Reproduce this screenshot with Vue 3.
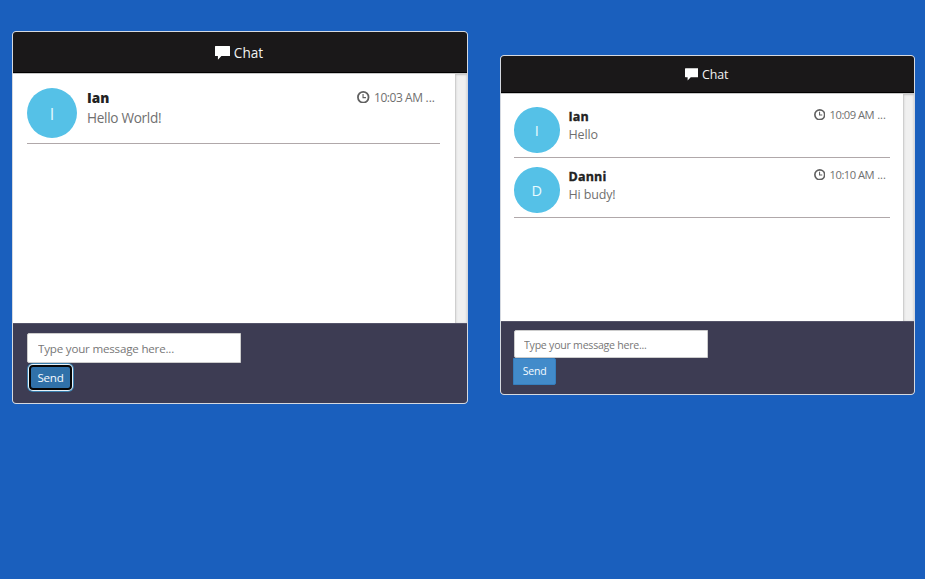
<script setup>
const rooms = [
  {
    size: 'large',
    focused: true,
    messages: [{ name: 'Ian', text: 'Hello World!', time: '10:03 AM' }]
  },
  {
    size: 'small',
    focused: false,
    messages: [
      { name: 'Ian', text: 'Hello', time: '10:09 AM' },
      { name: 'Danni', text: 'Hi budy!', time: '10:10 AM' }
    ]
  }
]
</script>

<template>
  <main class="page">
    <section v-for="room in rooms" :key="room.size" class="panel" :class="room.size">
      <header class="heading">
        <svg class="bubble" viewBox="0 0 15 14" aria-hidden="true">
          <path d="M0.5 0H14.5Q15 0 15 0.5V9.5Q15 10 14.5 10H6.4L2.9 13.8V10H0.5Q0 10 0 9.5V0.5Q0 0 0.5 0Z" fill="#fff" />
        </svg>
        <span class="title">Chat</span>
      </header>
      <div class="body">
        <ul class="list">
          <li v-for="m in room.messages" :key="m.time" class="message">
            <span class="avatar">{{ m.name[0] }}</span>
            <div class="content">
              <strong class="name">{{ m.name }}</strong>
              <span class="text">{{ m.text }}</span>
            </div>
            <small class="time">
              <svg class="clock" viewBox="0 0 12 12" aria-hidden="true">
                <circle cx="6" cy="6" r="5.1" fill="none" stroke="#606060" stroke-width="1.7" />
                <path d="M5.8 2.8V6.3H8.6" fill="none" stroke="#606060" stroke-width="1.1" />
              </svg>
              <span class="stamp">{{ m.time }}</span><span class="more">...</span>
            </small>
          </li>
        </ul>
        <div class="track"></div>
      </div>
      <footer class="footer">
        <input class="field" type="text" placeholder="Type your message here..." />
        <button class="send" :class="{ focused: room.focused }">Send</button>
      </footer>
    </section>
  </main>
</template>

<style>
body {
  background: #1a5fbd;
}
</style>

<style scoped>
* {
  box-sizing: border-box;
}
.page {
  display: flex;
  align-items: flex-start;
  gap: 32px;
  height: 579px;
  padding: 31px 0 0 12px;
  background: #1a5fbd;
  font-family: "Open Sans", "Noto Sans", sans-serif;
}
.panel {
  display: flex;
  flex: none;
  flex-direction: column;
  overflow: hidden;
  border: 1px solid #d5d9e0;
  border-radius: 4px;
  background: #fff;
}
.large {
  width: 456px;
  height: 373px;
}
.small {
  width: 415px;
  height: 340px;
  margin-top: 24px;
}
.heading {
  display: flex;
  flex: none;
  align-items: center;
  justify-content: center;
  gap: 4px;
  border-bottom: 1px solid #000;
  background: #1a1819;
  color: #f2f2f2;
  line-height: 20px;
}
.large .heading {
  height: 41px;
  padding: 1px 2px 0 0;
  font-size: 13.6px;
}
.small .heading {
  height: 37px;
  padding: 1px 2px 0 0;
  font-size: 12.4px;
  letter-spacing: -0.1px;
}
.bubble {
  width: 15px;
  height: 14px;
}
.small .bubble {
  width: 13.5px;
  height: 13px;
}
.body {
  display: flex;
  flex: 1;
  min-height: 0;
  border-top: 1px solid #c8c8c8;
}
.list {
  flex: 1;
  margin: 0;
  padding: 14px 15px 0 14px;
  list-style: none;
}
.small .list {
  padding: 13px 13px 0;
}
.track {
  width: 12px;
  background: #f0f0f0;
  box-shadow: inset 1px 1px 2px #c4c4c4, inset -1px 0 2px #ddd;
}
.small .track {
  width: 11px;
}
.message {
  display: flex;
  border-bottom: 1px solid #b0a8aa;
}
.large .message {
  height: 56px;
}
.small .message {
  height: 51px;
  margin-bottom: 9px;
}
.avatar {
  display: flex;
  flex: none;
  align-items: center;
  justify-content: center;
  border-radius: 50%;
  background: #55c1e7;
  color: #e8fbff;
}
.large .avatar {
  width: 50px;
  height: 50px;
  padding-top: 2px;
  font-size: 16px;
}
.small .avatar {
  width: 45.5px;
  height: 45.5px;
  padding-top: 1px;
  font-size: 14.5px;
}
.content {
  display: flex;
  flex: 1;
  flex-direction: column;
}
.large .content {
  padding-left: 10px;
  font-size: 13.6px;
  line-height: 20px;
}
.small .content {
  padding: 1px 0 0 9px;
  font-size: 12.5px;
  line-height: 18px;
}
.name {
  color: #222;
  font-weight: 800;
}
.small .name {
  font-size: 12.5px;
  font-weight: 700;
  letter-spacing: 0.2px;
  -webkit-text-stroke: 0.35px #222;
}
.text {
  color: #707070;
}
.large .text {
  letter-spacing: -0.3px;
}
.small .text {
  letter-spacing: -0.15px;
}
.time {
  display: flex;
  align-items: center;
  height: 18px;
  color: #707070;
}
.large .time {
  margin-right: 5px;
  font-size: 12px;
}
.small .time {
  height: 15px;
  margin-right: 4px;
  font-size: 11.2px;
}
.clock {
  width: 12.5px;
  height: 12.5px;
  margin-right: 4.5px;
}
.small .clock {
  width: 11.5px;
  height: 11.5px;
}
.stamp {
  letter-spacing: -0.45px;
}
.small .stamp {
  letter-spacing: -0.5px;
}
.more {
  margin-left: 3px;
}
.footer {
  display: flex;
  flex: none;
  flex-direction: column;
  align-items: flex-start;
  border-top: 1px solid #55546a;
  background: #3d3c53;
}
.large .footer {
  height: 80px;
  padding: 9px 14px;
}
.small .footer {
  height: 73px;
  padding: 8px 12px;
}
.field {
  flex: none;
  border: 1px solid #ccc;
  border-radius: 2px 0 0 2px;
  background: #fff;
  font-family: inherit;
}
.field::placeholder {
  color: #777;
  opacity: 1;
}
.large .field {
  width: 214px;
  height: 30px;
  padding: 1px 10px 0;
  font-size: 11.6px;
  letter-spacing: -0.2px;
}
.small .field {
  width: 194px;
  height: 28px;
  margin-left: 1px;
  padding: 1px 9px 0;
  font-size: 10.6px;
  letter-spacing: -0.25px;
}
.send {
  flex: none;
  padding: 0;
  border: 1px solid #357ebd;
  border-radius: 0 2px 2px 0;
  background: #428bca;
  color: #f5fbff;
  font-family: inherit;
}
.large .send {
  width: 43px;
  height: 25px;
  margin: 2px 0 0 2px;
  font-size: 11.6px;
  letter-spacing: -0.25px;
}
.small .send {
  width: 43px;
  height: 27px;
  padding-bottom: 2px;
  font-size: 10.5px;
  letter-spacing: -0.2px;
}
.send.focused {
  border: 2px solid #050505;
  border-radius: 4px;
  background: #3071a9;
  box-shadow: 0 0 0 1px #e8f3fa, 0 0 0 2px #3b7fae;
}
</style>
